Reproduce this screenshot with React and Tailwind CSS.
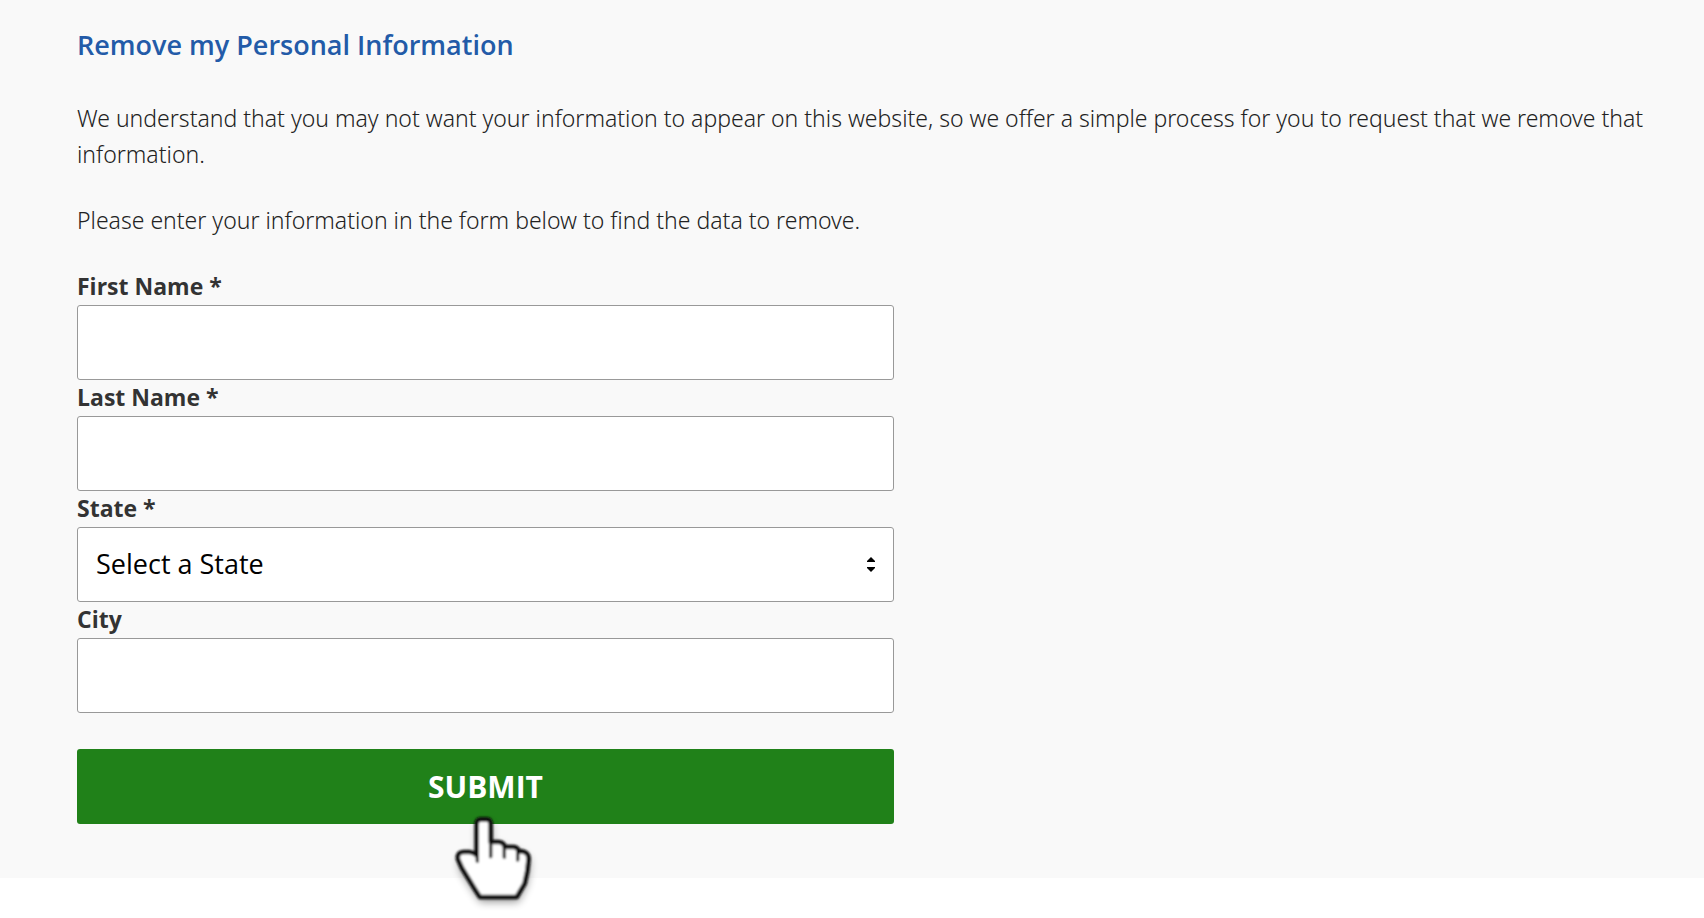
import { useState } from "react";

const STATES = ["California", "Florida", "New York", "Ohio", "Texas"];

const fieldClass =
  "block w-full h-[75px] rounded-[3px] border border-[#999999] bg-white px-[18px] pb-px text-[27px] text-black";

const labelClass = "block pb-px leading-[35px] font-bold";

const textClass = "font-['Noto_Sans','Open_Sans',sans-serif] font-light text-[#222222]";

function TextField({ id, label, value, onChange }) {
  return (
    <div>
      <label htmlFor={id} className={labelClass}>
        {label}
      </label>
      <input
        id={id}
        name={id}
        type="text"
        value={value}
        onChange={onChange}
        className={fieldClass}
      />
    </div>
  );
}

function HandPointer() {
  return (
    <svg
      viewBox="135 210 300 321"
      className="absolute left-1/2 top-[61px] -ml-[41px] w-[100px] h-[107px] pointer-events-none"
      aria-hidden="true"
    >
      <defs>
        <filter id="hand-shadow" x="-30%" y="-30%" width="160%" height="160%">
          <feGaussianBlur stdDeviation="12" />
        </filter>
        <filter id="hand-soft" x="-10%" y="-10%" width="120%" height="120%">
          <feGaussianBlur stdDeviation="3" />
        </filter>
      </defs>
      <path
        d="M228 250L236 238H264L272 250V305H304L318 320H348L360 334L380 340L387 356L380 420L352 476H238L180 388L172 350L190 335L228 342Z"
        transform="translate(3 10)"
        fill="#000"
        opacity="0.4"
        filter="url(#hand-shadow)"
      />
      <g filter="url(#hand-soft)" stroke="#111" strokeLinejoin="round" strokeLinecap="round">
        <path
          d="M230 344V250Q231 239 242 238H260Q271 239 272 250V306H296Q310 307 315 321H340Q352 321 357 334H366Q386 338 386 356L382 392L374 430L350 471H240L224 446L186 384L174 358Q171 336 192 336H208Q220 337 230 346Z"
          fill="#fff"
          strokeWidth="14"
        />
        <path d="M232 344V364M272 306V350M313 318V352M353 332V360" fill="none" strokeWidth="10" />
      </g>
    </svg>
  );
}

export default function App() {
  const [form, setForm] = useState({ firstName: "", lastName: "", state: "", city: "" });

  const update = (key) => (e) => setForm((prev) => ({ ...prev, [key]: e.target.value }));

  return (
    <div className="min-h-screen bg-white font-['Open_Sans',sans-serif]">
      <main className="bg-[#f9f9f9] pl-[77px] pr-6 pt-6 pb-[54px] text-[23px] leading-[36px] text-[#333333]">
        <h1 className="mb-[34px] text-[27px] leading-[42px] font-semibold text-[#235ba8]">
          Remove my Personal Information
        </h1>
        <p className={`mb-[30px] ${textClass}`}>
          We understand that you may not want your information to appear on this website, so we
          offer a simple process for you to request that we remove that information.
        </p>
        <p className={`mb-[31px] ${textClass}`}>
          Please enter your information in the form below to find the data to remove.
        </p>

        <form className="w-full max-w-[817px]" onSubmit={(e) => e.preventDefault()}>
          <TextField
            id="firstName"
            label="First Name *"
            value={form.firstName}
            onChange={update("firstName")}
          />
          <TextField
            id="lastName"
            label="Last Name *"
            value={form.lastName}
            onChange={update("lastName")}
          />

          <div>
            <label htmlFor="state" className={labelClass}>
              State *
            </label>
            <div className="relative">
              <select
                id="state"
                name="state"
                value={form.state}
                onChange={update("state")}
                className={`${fieldClass} appearance-none`}
              >
                <option value="">Select a State</option>
                {STATES.map((name) => (
                  <option key={name} value={name}>
                    {name}
                  </option>
                ))}
              </select>
              <svg
                viewBox="0 0 8 15"
                className="absolute right-[19px] top-[30px] w-2 h-[15px] pointer-events-none"
                aria-hidden="true"
              >
                <path d="M4 0L8 4V5H0V4ZM0 10H8V11L4 15L0 11Z" fill="#000" />
              </svg>
            </div>
          </div>

          <TextField id="city" label="City" value={form.city} onChange={update("city")} />

          {/* Submit, with the hand resting on its lower edge */}
          <div className="relative mt-9">
            <button
              type="submit"
              className="block w-full h-[75px] rounded-[3px] bg-[#208119] text-[30px] font-bold text-white cursor-pointer"
            >
              SUBMIT
            </button>
            <HandPointer />
          </div>
        </form>
      </main>
    </div>
  );
}
